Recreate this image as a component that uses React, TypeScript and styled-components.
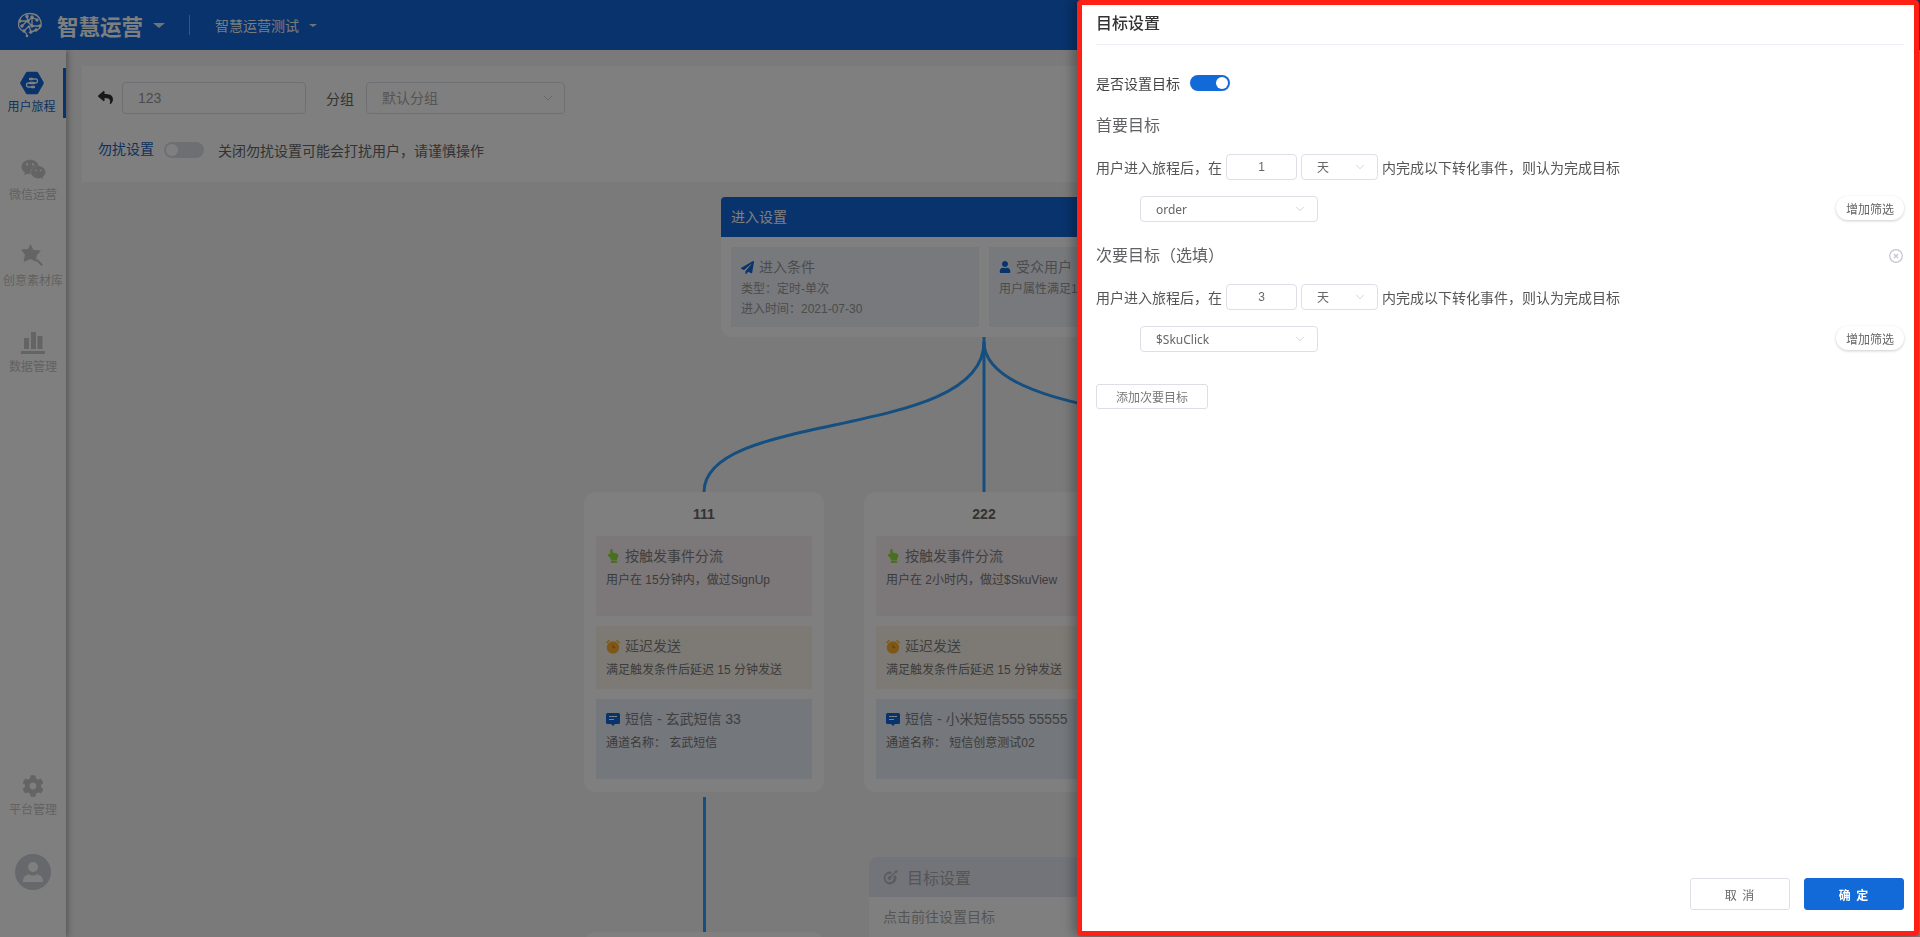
import React from "react";
import styled, { createGlobalStyle } from "styled-components";
import { FaWeixin, FaCog, FaPaperPlane, FaUser, FaReply, FaHandPointUp } from "react-icons/fa";
import { ChevronDown } from "lucide-react";

const Global = createGlobalStyle`
  html, body { margin: 0; padding: 0; height: 100%; overflow: hidden; background: #fff; }
  #root { height: 100%; }
  * { box-sizing: border-box; }
  body { font-family: "Liberation Sans", "Noto Sans CJK SC", sans-serif; font-size: 14px; color: #333; }
`;

const Page = styled.div`width: 1920px; height: 937px; overflow: hidden; display: flex; flex-direction: column; background: #f4f4f4;`;
const Header = styled.header`height: 50px; flex: none; background: #1066d8; display: flex; align-items: center; padding-left: 17px; color: #fff; position: relative; z-index: 2;`;
const BrandName = styled.span`font-size: 21.5px; font-weight: 700; margin-left: 14px; color: #fff; letter-spacing: 0;`;
const Caret = styled.i<{ $s?: number }>`width: 0; height: 0; border-left: ${p => p.$s ?? 6}px solid transparent; border-right: ${p => p.$s ?? 6}px solid transparent; border-top: ${p => (p.$s ?? 6) * 0.85}px solid #fff; opacity: .85; margin-left: 10px;`;
const HeadDivider = styled.span`width: 1px; height: 20px; background: rgba(255,255,255,.45); margin: 0 25px 0 24px;`;
const SubName = styled.span`font-size: 14px; color: #fff; opacity: .95;`;

const Body = styled.div`flex: 1; display: flex; min-height: 0;`;
const Side = styled.aside`width: 66px; flex: none; background: #fff; box-shadow: 2px 0 6px rgba(0,0,0,.3); display: flex; flex-direction: column; position: relative; z-index: 1;`;
const NavItem = styled.div<{ $h: number }>`
  height: ${p => p.$h}px; display: flex; flex-direction: column; align-items: center; justify-content: flex-end;
  gap: 5px; font-size: 12px; line-height: 16px; white-space: nowrap; color: #c4c4c4;
`;
const ActiveWrap = styled.div`height: 50px; margin-top: 18px; display: flex; flex-direction: column; align-items: center; justify-content: center; gap: 4px; font-size: 12px; line-height: 16px; color: #1a62c0; border-right: 3px solid #1066d8; `;
const SideSpace = styled.div`flex: 1;`;
const Avatar = styled.div`width: 36px; height: 36px; border-radius: 50%; background: #ccd0d8; align-self: center; margin: 36px 0 47px 0; overflow: hidden; display: flex; align-items: center; justify-content: center;`;

const Main = styled.main`flex: 1; min-width: 0; padding: 16px 0 0 16px; position: relative; overflow: hidden;`;
const TopPanel = styled.section`height: 116px; width: 1822px; background: #fff; padding: 16px 16px; display: flex; flex-direction: column;`;
const TopRow = styled.div`display: flex; align-items: center; height: 32px;`;
const BackBtn = styled.span`display: inline-flex; color: #333; font-size: 14px; width: 24px; margin-top: -1px;`;
const NameInput = styled.div`width: 184px; height: 32px; border: 1px solid #dcdfe6; border-radius: 4px; padding-left: 15px; line-height: 30px; font-size: 14px; color: #999;`;
const GroupLabel = styled.span`margin: 0 12px 0 20px; font-size: 14px; color: #666;`;
const GroupSelect = styled.div`width: 199px; height: 32px; border: 1px solid #dcdfe6; border-radius: 4px; padding: 0 8px 0 15px; display: flex; align-items: center; justify-content: space-between; color: #aaa; font-size: 14px; line-height: 30px;`;
const DndRow = styled.div`display: flex; align-items: center; margin-top: 28px; height: 16px;`;
const DndLabel = styled.span`font-size: 14px; color: #1a62c0; margin-top: -4px;`;
const OffSwitch = styled.span`width: 40px; height: 16px; border-radius: 8px; background: #dcdfe6; margin: 0 14px 0 10px; display: flex; align-items: center; padding-left: 2px; &::before { content: ""; width: 12px; height: 12px; border-radius: 50%; background: #fff; }`;
const DndTip = styled.span`font-size: 14px; color: #666;`;

const Diagram = styled.div`position: relative; width: 1822px; margin-top: 15px;`;
const Links = styled.svg`position: absolute; left: 0; top: 0;`;
const EntryCard = styled.section`width: 526px; margin-left: 639px; height: 140px; background: #fff; border-radius: 0 0 12px 12px; position: relative;`;
const EntryHead = styled.div`height: 40px; background: #1066d8; border-radius: 4px 4px 0 0; padding-left: 10px; line-height: 40px; color: #fff; font-size: 14px;`;
const EntryBody = styled.div`display: flex; gap: 10px; padding: 10px;`;
const EntryBox = styled.div`width: 248px; height: 80px; background: #eff2fa; padding: 10px 10px;`;
const BoxTitle = styled.div`display: flex; align-items: center; gap: 5px; font-size: 14px; line-height: 20px; color: #999; white-space: nowrap; svg { flex: none; }`;
const BoxText = styled.div`font-size: 12px; line-height: 20px; color: #999; white-space: nowrap; margin-top: 2px; & + & { margin-top: 0; }`;

const BranchRow = styled.div`display: flex; gap: 40px; margin: 155px 0 0 502px; position: relative;`;
const Column = styled.div`width: 240px; flex: none; display: flex; flex-direction: column;`;
const BranchCard = styled.div`height: 300px; background: #fff; border-radius: 12px; padding: 0 12px; display: flex; flex-direction: column; gap: 10px;`;
const BranchTitle = styled.div`height: 34px; padding-top: 13px; text-align: center; font-weight: 700; font-size: 14px; line-height: 18px; color: #666;`;
const Step = styled.div<{ $bg: string; $h: number }>`height: ${p => p.$h}px; background: ${p => p.$bg}; padding: 10px;`;
const StepText = styled.div`font-size: 12px; line-height: 20px; color: #777; white-space: nowrap; margin-top: 4px;`;
const StepTitle = styled(BoxTitle)`color: #808080;`;
const Connector = styled.div`width: 3px; height: 135px; background: #2a9eff; margin: 5px 0 0 119px;`;
const NextCard = styled.div`height: 60px; background: #fff; border-radius: 12px;`;
const TargetCard = styled.div`width: 240px; margin: 65px 0 0 5px; background: #fff; border-radius: 8px 8px 0 0;`;
const TargetHead = styled.div`height: 40px; background: #e5e9f5; display: flex; align-items: center; gap: 9px; padding-left: 14px; font-size: 16px; color: #aaa; border-radius: 8px 8px 0 0;`;
const TargetText = styled.div`padding: 10px 14px; font-size: 14px; line-height: 20px; color: #aaa;`;

const Overlay = styled.div`position: fixed; inset: 0; background: rgba(0,0,0,.5); z-index: 10;`;
const Drawer = styled.aside`
  position: fixed; top: 0; right: 1px; width: 842px; height: 936px; z-index: 11; background: #fff;
  border: 5px solid #ff2015; border-radius: 4px; padding: 0 10px 0 14px; display: flex; flex-direction: column;
  box-shadow: -4px 0 12px rgba(0,0,0,.3);
`;
const DrawerTitle = styled.h2`margin: 0; height: 40px; flex: none; border-bottom: 1px solid #ebeef5; font-size: 16px; font-weight: 500; line-height: 38px; color: #333;`;
const SwitchRow = styled.div`display: flex; align-items: center; margin-top: 29px; height: 18px; font-size: 14px; color: #444;`;
const OnSwitch = styled.span`width: 40px; height: 16px; border-radius: 8px; background: #126ad9; margin-left: 10px; display: flex; align-items: center; justify-content: flex-end; padding-right: 2px; &::before { content: ""; width: 12px; height: 12px; border-radius: 50%; background: #fff; }`;
const GoalHead = styled.div<{ $top: number }>`display: flex; justify-content: space-between; align-items: center; margin-top: ${p => p.$top}px; height: 22px; font-size: 16px; line-height: 22px; color: #606266;`;
const CloseMark = styled.span`display: inline-flex; margin-right: 1px;`;
const RuleRow = styled.div<{ $top: number }>`display: flex; align-items: center; margin-top: ${p => p.$top}px; height: 26px; font-size: 14px; color: #555; white-space: nowrap;`;
const Num = styled.div`width: 71px; height: 26px; margin: 0 4px; border: 1px solid #dcdfe6; border-radius: 4px; text-align: center; font-size: 12px; line-height: 24px; color: #666;`;
const Sel = styled.div<{ $w: number }>`width: ${p => p.$w}px; height: 26px; border: 1px solid #dcdfe6; border-radius: 4px; display: flex; align-items: center; justify-content: space-between; padding: 0 10px 0 15px; font-family: "Noto Sans", "Noto Sans CJK SC", sans-serif; font-size: 12px; color: #666; flex: none;`;
const UnitWrap = styled.div`margin-right: 4px;`;
const EventRow = styled.div<{ $top: number }>`display: flex; align-items: flex-start; justify-content: space-between; margin: ${p => p.$top}px 0 0 44px; height: 26px;`;
const FilterBtn = styled.button`width: 68px; height: 24px; border: 0; border-radius: 12px; background: #fff; box-shadow: 0 1px 3px rgba(0,0,0,.2); font: inherit; font-size: 12px; color: #666; padding: 0;`;
const AddBtn = styled.button`width: 112px; height: 25px; margin-top: 32px; border: 1px solid #dcdfe6; border-radius: 3px; background: #fff; font: inherit; font-size: 12px; color: #777; padding: 0;`;
const Spacer = styled.div`flex: 1;`;
const Footer = styled.div`display: flex; justify-content: flex-end; gap: 14px; padding-bottom: 21px;`;
const FootBtn = styled.button<{ $primary?: boolean }>`
  width: 100px; height: 32px; border-radius: 3px; font: inherit; font-size: 12px; padding: 0;
  border: 1px solid ${p => (p.$primary ? "#126ad9" : "#dcdfe6")};
  background: ${p => (p.$primary ? "#126ad9" : "#fff")}; color: ${p => (p.$primary ? "#fff" : "#666")};
  font-weight: ${p => (p.$primary ? 700 : 400)}; letter-spacing: 1px;
`;

const Logo = () => (
  <svg width="26" height="26" viewBox="0 0 26 26" fill="none" stroke="#fff" strokeWidth="1.300">
    <path d="M13 1.500C7 1.500 3 5 2 9.500 1 13 2 17 6 19c3 1.500 4 3 4 5M13 1.500c5 0 9 3 10.500 7 1.500 4 0 8-3.500 9.500-3 1.300-6 1-8 3" />
    <path d="M3 9h8l4-4 5 3M5 14l5-5 5 5h8M7 19l5-5 2 6 5-2M10 5l1 4M15 5v9" />
    <g fill="#fff" stroke="none">
      <circle cx="10" cy="4.500" r="1.700" /><circle cx="15" cy="5" r="1.700" /><circle cx="20" cy="8" r="1.700" /><circle cx="3" cy="9" r="1.700" />
      <circle cx="11" cy="9" r="1.700" /><circle cx="5" cy="14" r="1.700" /><circle cx="15" cy="14" r="1.700" /><circle cx="23" cy="14" r="1.700" />
      <circle cx="7" cy="19" r="1.700" /><circle cx="14" cy="20" r="1.700" /><circle cx="19" cy="18" r="1.700" /><circle cx="10" cy="24" r="1.300" />
    </g>
  </svg>
);

const JourneyIcon = () => (
  <svg width="24" height="24" viewBox="0 0 24 24">
    <path d="M7.500 2.500h9L22 12l-5.500 9.500h-9L2 12z" fill="#1066d8" stroke="#1066d8" strokeLinejoin="round" strokeWidth="3.500" />
    <path d="M9 8h6.500M15.500 8a2 2 0 0 1 0 4h-7a2 2 0 0 0 0 4H15" fill="none" stroke="#fff" strokeWidth="1.300" />
    <rect x="9" y="6.700" width="4" height="2.600" rx="1" fill="#fff" />
    <rect x="9" y="10.700" width="6" height="2.600" rx="1" fill="#fff" />
    <rect x="11" y="14.700" width="4" height="2.600" rx="1" fill="#fff" />
  </svg>
);

const StarIcon = () => (
  <svg width="24" height="24" viewBox="0 0 24 24" fill="#c8c8c8">
    <path d="M9.500 0l3 6 7.500.5-4.500 5.500 0 6-6-3-7 3 1.500-7L0 5.500l7-.5z" />
    <path d="M16.500 15l5.500 5.500-1.500 1.500-5.500-5.500z" />
  </svg>
);
const BarsIcon = () => (
  <svg width="24" height="24" viewBox="0 0 24 24" fill="#c8c8c8">
    <rect x="3" y="8" width="5" height="11" /><rect x="10" y="2" width="5" height="17" /><rect x="16.500" y="6" width="5" height="13" />
    <rect x="0" y="21" width="24" height="3" />
  </svg>
);
const AvatarIcon = () => (
  <svg width="36" height="36" viewBox="0 0 36 36" fill="#fff">
    <circle cx="18" cy="13" r="5" /><path d="M8 28c0-4 1-6 6-8 2 2 6 2 8 0 5 2 6 4 6 8z" />
  </svg>
);
const AlarmIcon = () => (
  <svg width="14" height="15" viewBox="0 0 14 15" fill="#ffb030">
    <circle cx="7" cy="8.500" r="6.200" /><path d="M0 3.500L3 .8l1 1L1 4.500zM14 3.500L11 .8l-1 1 3 2.700z" />
    <path d="M7 5.500v3.200h2.500" fill="none" stroke="#b87a10" strokeWidth="1" />
  </svg>
);
const SmsIcon = () => (
  <svg width="14" height="13" viewBox="0 0 14 13" fill="#1066d8">
    <path d="M1.500 0h11A1.500 1.500 0 0 1 14 1.500v8a1.500 1.500 0 0 1-1.500 1.500H9l-2 2-2-2H1.500A1.500 1.500 0 0 1 0 9.500v-8A1.500 1.500 0 0 1 1.500 0z" />
    <path d="M3 3.500h8M3 6.500h5" stroke="#fff" strokeWidth="1.200" />
  </svg>
);
const TargetIcon = () => (
  <svg width="15" height="15" viewBox="0 0 15 15">
    <path d="M12.800 5A6.500 6.500 0 1 1 8.800 1.700L8 4.200A4 4 0 0 0 6.500 4 4 4 0 1 0 10.500 8 4 4 0 0 0 10.300 6.600z" fill="#b8bac2" />
    <circle cx="6.500" cy="8" r="2" fill="#b8bac2" />
    <path d="M7 7.500L12.500 2" stroke="#b8bac2" strokeWidth="1.400" />
    <path d="M11.500 1l.3 1.700 1.700.3L15 1.500 13.500 0z" fill="#b8bac2" />
  </svg>
);
const CloseCircle = () => (
  <svg width="14" height="14" viewBox="0 0 14 14" fill="none" stroke="#c4c6cc">
    <circle cx="7" cy="7" r="6.300" strokeWidth="1.200" />
    <path d="M5 5l4 4M9 5l-4 4" strokeWidth="1.200" />
  </svg>
);
const Chev = () => <ChevronDown size={14} strokeWidth={1.2} color="#c0c4cc" />;

const Hand = () => <FaHandPointUp size={14} color="#90e040" />;
const Branch = ({ title, trigger, sms, channel }: { title: string; trigger: string; sms: string; channel: string }) => (
  <BranchCard>
    <BranchTitle>{title}</BranchTitle>
    <Step $bg="#f9eff1" $h={80}>
      <StepTitle><Hand />按触发事件分流</StepTitle>
      <StepText>{trigger}</StepText>
    </Step>
    <Step $bg="#faf5ec" $h={63}>
      <StepTitle><AlarmIcon />延迟发送</StepTitle>
      <StepText>满足触发条件后延迟 15 分钟发送</StepText>
    </Step>
    <Step $bg="#e9eff7" $h={80}>
      <StepTitle><SmsIcon />{sms}</StepTitle>
      <StepText>{channel}</StepText>
    </Step>
  </BranchCard>
);

const Goal = ({ n, event, top }: { n: string; event: string; top: number }) => (
  <>
    <RuleRow $top={top}>
      用户进入旅程后，在
      <Num>{n}</Num>
      <UnitWrap><Sel $w={77}>天<Chev /></Sel></UnitWrap>
      内完成以下转化事件，则认为完成目标
    </RuleRow>
    <EventRow $top={16}>
      <Sel $w={178}>{event}<Chev /></Sel>
      <FilterBtn>增加筛选</FilterBtn>
    </EventRow>
  </>
);

export default function App() {
  return (
    <Page>
      <Global />
      <Header>
        <Logo />
        <BrandName>智慧运营</BrandName>
        <Caret />
        <HeadDivider />
        <SubName>智慧运营测试</SubName>
        <Caret $s={4} />
      </Header>
      <Body>
        <Side>
          <ActiveWrap><JourneyIcon />用户旅程</ActiveWrap>
          <NavItem $h={85}><FaWeixin size={25} color="#c8c8c8" />微信运营</NavItem>
          <NavItem $h={86}><StarIcon />创意素材库</NavItem>
          <NavItem $h={86}><BarsIcon />数据管理</NavItem>
          <SideSpace />
          <NavItem $h={60}><FaCog size={22} color="#c8c8c8" />平台管理</NavItem>
          <Avatar><AvatarIcon /></Avatar>
        </Side>
        <Main>
          <TopPanel>
            <TopRow>
              <BackBtn><FaReply size={15} /></BackBtn>
              <NameInput>123</NameInput>
              <GroupLabel>分组</GroupLabel>
              <GroupSelect>默认分组<ChevronDown size={16} strokeWidth={1.2} color="#c0c4cc" /></GroupSelect>
            </TopRow>
            <DndRow>
              <DndLabel>勿扰设置</DndLabel>
              <OffSwitch />
              <DndTip>关闭勿扰设置可能会打扰用户，请谨慎操作</DndTip>
            </DndRow>
          </TopPanel>
          <Diagram>
            <Links width="1822" height="740" viewBox="82 197 1822 740" fill="none" stroke="#2a9eff" strokeWidth="3">
              <path d="M984 337V492" />
              <path d="M984 342C984 440 704 410 704 492" />
              <path d="M984 342C984 440 1400 410 1400 492" />
            </Links>
            <EntryCard>
              <EntryHead>进入设置</EntryHead>
              <EntryBody>
                <EntryBox>
                  <BoxTitle><FaPaperPlane size={13} color="#1066d8" />进入条件</BoxTitle>
                  <BoxText>类型：定时-单次</BoxText>
                  <BoxText>进入时间：2021-07-30</BoxText>
                </EntryBox>
                <EntryBox>
                  <BoxTitle><FaUser size={12} color="#1066d8" />受众用户</BoxTitle>
                  <BoxText>用户属性满足1个条件</BoxText>
                </EntryBox>
              </EntryBody>
            </EntryCard>
            <BranchRow>
              <Column>
                <Branch title="111" trigger="用户在 15分钟内，做过SignUp" sms="短信 - 玄武短信 33" channel="通道名称：  玄武短信" />
                <Connector />
                <NextCard />
              </Column>
              <Column>
                <Branch title="222" trigger="用户在 2小时内，做过$SkuView" sms="短信 - 小米短信555 55555" channel="通道名称：  短信创意测试02" />
                <TargetCard>
                  <TargetHead><TargetIcon />目标设置</TargetHead>
                  <TargetText>点击前往设置目标</TargetText>
                </TargetCard>
              </Column>
            </BranchRow>
          </Diagram>
        </Main>
      </Body>
      <Overlay />
      <Drawer>
        <DrawerTitle>目标设置</DrawerTitle>
        <SwitchRow>是否设置目标<OnSwitch /></SwitchRow>
        <GoalHead $top={23}>首要目标</GoalHead>
        <Goal n="1" event="order" top={17} />
        <GoalHead $top={23}>次要目标（选填）<CloseMark><CloseCircle /></CloseMark></GoalHead>
        <Goal n="3" event="$SkuClick" top={17} />
        <AddBtn>添加次要目标</AddBtn>
        <Spacer />
        <Footer>
          <FootBtn>取 消</FootBtn>
          <FootBtn $primary>确 定</FootBtn>
        </Footer>
      </Drawer>
    </Page>
  );
}
